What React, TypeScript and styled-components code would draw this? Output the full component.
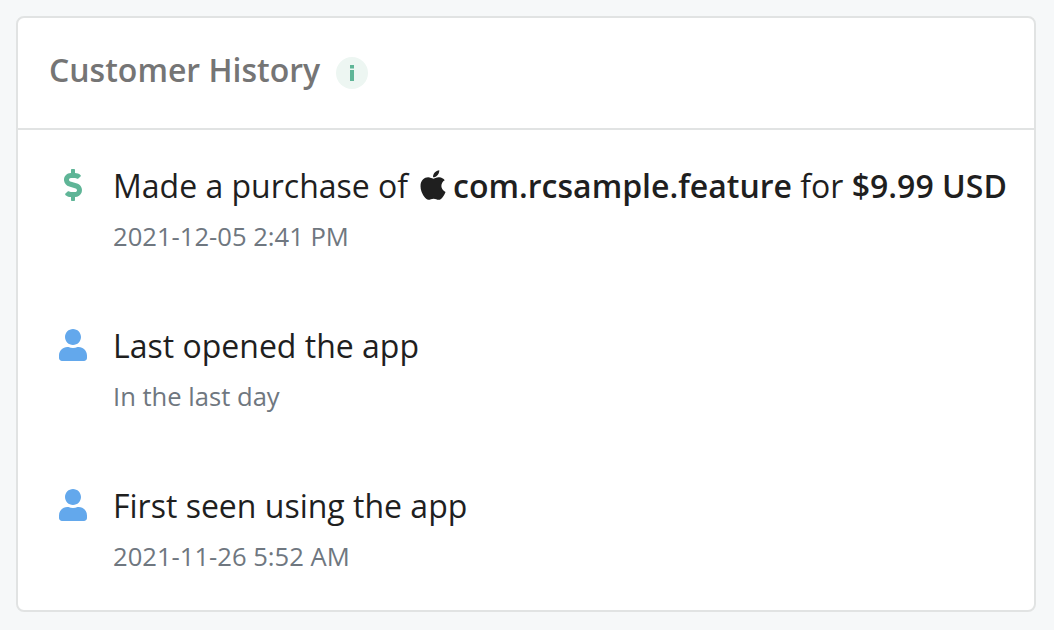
import styled, { createGlobalStyle } from "styled-components";
import { FaApple, FaDollarSign, FaUser } from "react-icons/fa";
import type { ReactNode } from "react";

const GlobalStyle = createGlobalStyle`
  html, body {
    margin: 0;
    padding: 0;
    background: #f6f8f9;
  }
`;

const Page = styled.div`
  box-sizing: border-box;
  width: 1054px;
  height: 630px;
  padding: 16px 18px 18px 16px;
  font-family: "Open Sans", "Liberation Sans", sans-serif;
`;

const Card = styled.section`
  box-sizing: border-box;
  height: 596px;
  background: #fff;
  border: 2px solid #e1e3e3;
  border-radius: 8px;
`;

const CardHeader = styled.header`
  box-sizing: border-box;
  height: 112px;
  display: flex;
  align-items: center;
  gap: 16px;
  padding: 0 31px 6px;
  border-bottom: 2px solid #e1e3e3;
`;

const Title = styled.h2`
  margin: 0;
  font-size: 32px;
  font-weight: 600;
  line-height: 40px;
  color: #757575;
`;

const InfoBadge = styled.span`
  width: 32px;
  height: 32px;
  margin-top: 6px;
  border-radius: 50%;
  background: #edf6f2;
  color: #5fb597;
  display: flex;
  align-items: center;
  justify-content: center;
`;

const EventList = styled.ul`
  list-style: none;
  margin: 0;
  padding: 34px 0 0;
`;

const EventRow = styled.li`
  height: 160px;
  display: grid;
  grid-template-columns: 95px 1fr;
`;

const IconCell = styled.div<{ $color: string }>`
  display: flex;
  justify-content: center;
  align-items: flex-start;
  padding: 5px 0 0 14px;
  box-sizing: border-box;
  width: 95px;
  height: 44px;
  color: ${({ $color }) => $color};
`;

const EventBody = styled.div`
  display: flex;
  flex-direction: column;
`;

const EventText = styled.div`
  font-size: 32px;
  line-height: 44px;
  color: #1f1f1f;
  white-space: nowrap;
  display: flex;
  align-items: center;
`;

const Strong = styled.strong`
  font-weight: 600;
`;

const AppleMark = styled(FaApple)`
  width: 34px;
  height: 34px;
  margin: -2px 3px 0 8px;
  color: #1f1f1f;
`;

const EventDate = styled.div`
  margin-top: 12px;
  font-size: 25.6px;
  line-height: 34px;
  color: #6f7780;
`;

const Space = styled.span`
  white-space: pre;
`;

interface HistoryEvent {
  readonly id: string;
  readonly icon: ReactNode;
  readonly color: string;
  readonly text: ReactNode;
  readonly date: string;
}

const events: ReadonlyArray<HistoryEvent> = [
  {
    id: "purchase",
    icon: <FaDollarSign size={32} />,
    color: "#5fb597",
    text: (
      <>
        Made a purchase of
        <AppleMark />
        <Strong>com.rcsample.feature</Strong>
        <Space> for </Space>
        <Strong>$9.99 USD</Strong>
      </>
    ),
    date: "2021-12-05 2:41 PM",
  },
  {
    id: "opened",
    icon: <FaUser size={32} />,
    color: "#63a8ec",
    text: "Last opened the app",
    date: "In the last day",
  },
  {
    id: "seen",
    icon: <FaUser size={32} />,
    color: "#63a8ec",
    text: "First seen using the app",
    date: "2021-11-26 5:52 AM",
  },
];

export default function App() {
  return (
    <Page>
      <GlobalStyle />
      <Card>
        <CardHeader>
          <Title>Customer History</Title>
          <InfoBadge>
            <svg width="8" height="16" viewBox="0 0 8 16" aria-hidden="true">
              <rect x="2" y="0" width="4" height="3.5" fill="currentColor" />
              <rect x="2" y="5" width="4" height="11" fill="currentColor" />
            </svg>
          </InfoBadge>
        </CardHeader>
        <EventList>
          {events.map((event) => (
            <EventRow key={event.id}>
              <IconCell $color={event.color}>{event.icon}</IconCell>
              <EventBody>
                <EventText>{event.text}</EventText>
                <EventDate>{event.date}</EventDate>
              </EventBody>
            </EventRow>
          ))}
        </EventList>
      </Card>
    </Page>
  );
}
